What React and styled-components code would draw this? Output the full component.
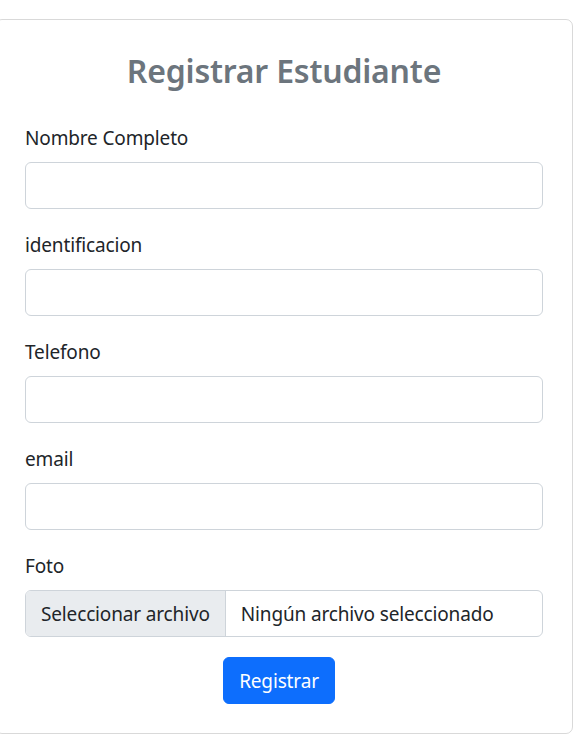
import React from "react";
import styled, { createGlobalStyle } from "styled-components";

const GlobalStyle = createGlobalStyle`
  * {
    box-sizing: border-box;
  }

  body {
    margin: 0;
    background: #ffffff;
    font-family: "Noto Sans", "Open Sans", Arial, sans-serif;
    color: #212529;
  }
`;

const Page = styled.div`
  padding-top: 19px;
  overflow: hidden;
`;

const Card = styled.div`
  width: 578px;
  margin-left: -5px;
  border: 1px solid rgba(0, 0, 0, 0.15);
  border-radius: 7px;
  padding: 32px 29px 29px;
`;

const Title = styled.h2`
  margin: 0 0 31.6px;
  text-align: center;
  font-size: 32px;
  font-weight: 600;
  letter-spacing: -0.2px;
  line-height: 1.2;
  color: #6c757d;
`;

const Field = styled.div`
  margin-bottom: 20px;
`;

const Label = styled.label`
  display: block;
  padding-top: 1px;
  margin-bottom: 9px;
  font-size: 19px;
  letter-spacing: -0.15px;
  line-height: 30px;
`;

const Input = styled.input`
  display: block;
  width: 100%;
  height: 47px;
  padding: 7px 15px;
  font: inherit;
  font-size: 19px;
  color: #212529;
  background: #fff;
  border: 1px solid #ced4da;
  border-radius: 6px;
  outline: none;
`;

const FileBox = styled.div`
  display: flex;
  align-items: stretch;
  height: 47px;
  border: 1px solid #ced4da;
  border-radius: 6px;
  overflow: hidden;
  font-size: 19px;
  letter-spacing: -0.15px;
  line-height: 30px;
`;

const FileButton = styled.span`
  display: flex;
  align-items: center;
  padding: 1px 15px 0;
  background: #e9ecef;
  border-right: 1px solid #ced4da;
  white-space: nowrap;
`;

const FileName = styled.span`
  display: flex;
  align-items: center;
  padding: 1px 15px 0;
  white-space: nowrap;
`;

const ButtonRow = styled.div`
  display: flex;
  justify-content: center;
  margin-right: 10px;
`;

const SubmitButton = styled.button`
  height: 47px;
  padding: 1px 15px 0;
  font: inherit;
  font-size: 19px;
  letter-spacing: -0.15px;
  line-height: 30px;
  color: #fff;
  background: #0d6efd;
  border: 1px solid #0d6efd;
  border-radius: 6px;
  cursor: pointer;
`;

const fields = [
  { id: "nombre", label: "Nombre Completo", type: "text" },
  { id: "identificacion", label: "identificacion", type: "text" },
  { id: "telefono", label: "Telefono", type: "text" },
  { id: "email", label: "email", type: "email" },
];

export default function App() {
  return (
    <>
      <GlobalStyle />
      <Page>
        <Card>
          <Title>Registrar Estudiante</Title>
          <form onSubmit={(e) => e.preventDefault()}>
            {fields.map((f) => (
              <Field key={f.id}>
                <Label htmlFor={f.id}>{f.label}</Label>
                <Input id={f.id} type={f.type} />
              </Field>
            ))}
            <Field>
              <Label htmlFor="foto">Foto</Label>
              <FileBox id="foto">
                <FileButton>Seleccionar archivo</FileButton>
                <FileName>Ningún archivo seleccionado</FileName>
              </FileBox>
            </Field>
            <ButtonRow>
              <SubmitButton type="submit">Registrar</SubmitButton>
            </ButtonRow>
          </form>
        </Card>
      </Page>
    </>
  );
}
